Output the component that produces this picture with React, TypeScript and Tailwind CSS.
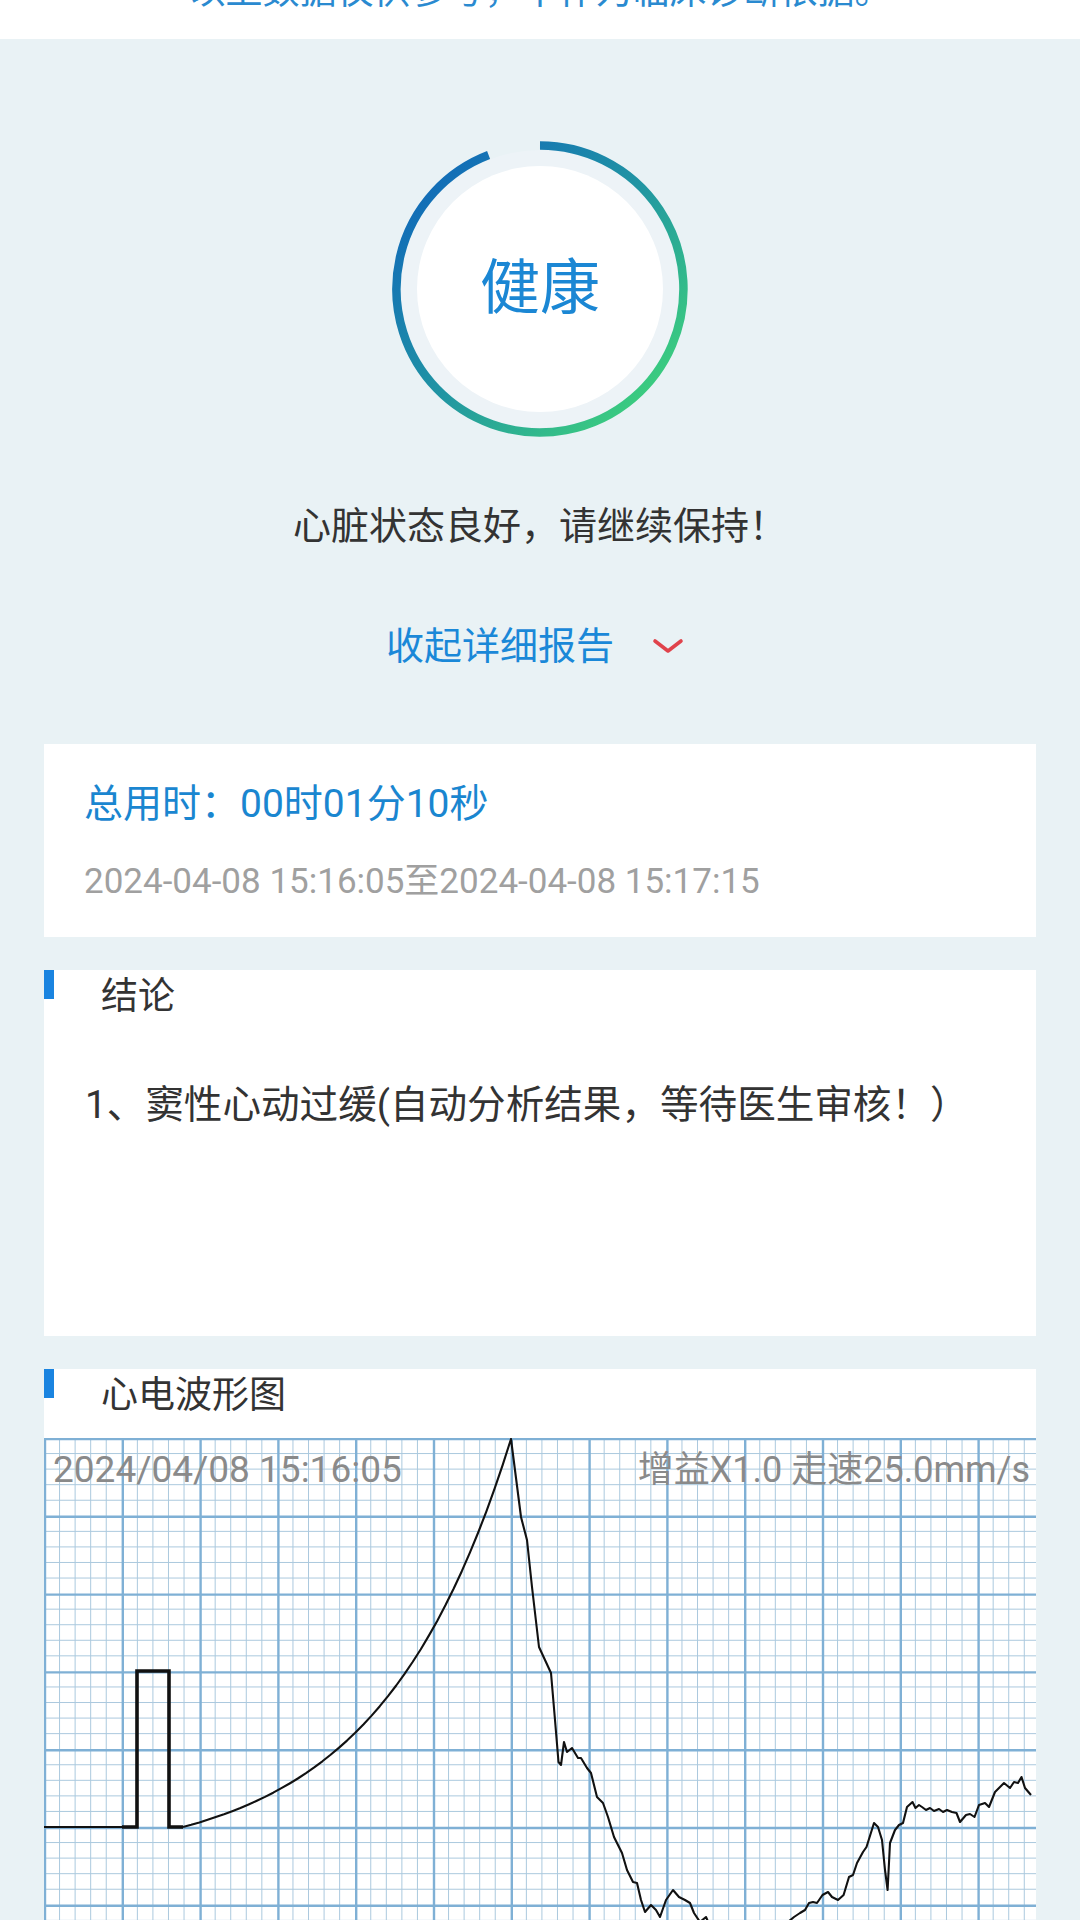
import React from 'react';

const MAJOR = 77.8;
const MINOR = MAJOR / 5;
const GRID_W = 992;
const GRID_H = 500;

// rising curve after the calibration pulse, then the noisy tail
const buildWave = () => {
  const pts: [number, number][] = [];
  const k = 2.5;
  for (let i = 0; i <= 40; i++) {
    const t = i / 40;
    const f = (Math.exp(k * t) - 1) / (Math.exp(k) - 1);
    pts.push([139 + t * 328, 389 - 388 * f]);
  }
  const tail: [number, number][] = [
    [477, 79], [483, 102], [488, 149], [495, 209], [501, 222], [507, 235], [511, 282],
    [514.5, 324], [517, 327], [520, 304], [523, 314], [528, 310], [534, 320], [537, 320],
    [543, 330], [547, 335], [553, 359], [559, 365], [564, 379], [570, 399], [578, 415],
    [583, 432], [589, 444], [593, 445], [597, 462], [601, 474], [607, 467], [612, 472],
    [616, 479], [622, 462], [629, 452], [635, 459], [641, 462], [646, 465], [650, 475],
    [656, 484], [662, 479], [666, 488], [700, 505], [716, 502], [744, 484], [750, 479],
    [756, 475], [761, 472], [765, 465], [769, 464], [773, 465], [778.5, 457], [784, 454],
    [788, 459], [794, 462], [799.6, 457], [805, 439], [809, 437], [813, 425], [819, 414],
    [822.5, 409], [830, 385], [834, 389], [838, 402], [841, 432], [843.6, 452], [846, 405],
    [851, 392], [855, 387], [859, 385], [863, 369], [868.5, 364], [871.5, 370], [875, 367],
    [878, 369], [882, 372], [886, 370], [890, 373], [895, 371], [899, 374], [903, 372],
    [908, 374], [912.5, 375], [916, 384], [922, 377], [926, 376], [930.5, 379], [935, 367],
    [941, 365], [945, 369], [951, 354], [956, 349], [960, 345], [966, 350], [970, 344],
    [974, 345], [977.5, 339], [981, 350], [987, 357],
  ];
  return pts.concat(tail).map(([x, y]) => `${x.toFixed(1)},${y.toFixed(1)}`).join(' ');
};

const EcgGrid: React.FC = () => {
  const vCount = Math.ceil(GRID_W / MINOR);
  const hCount = Math.ceil(GRID_H / MINOR);
  const vLines = Array.from({ length: vCount + 1 }, (_, i) => i);
  const hLines = Array.from({ length: hCount + 1 }, (_, i) => i);

  return (
    <div className="relative w-full h-[500px]">
      <svg width={GRID_W} height={GRID_H} className="block">
        {vLines.filter(i => i % 5 !== 0).map(i => (
          <line key={`vm${i}`} x1={i * MINOR} y1={0} x2={i * MINOR} y2={GRID_H} stroke="#abc9de" strokeWidth={1} />
        ))}
        {hLines.filter(i => i % 5 !== 0).map(i => (
          <line key={`hm${i}`} x1={0} y1={i * MINOR} x2={GRID_W} y2={i * MINOR} stroke="#abc9de" strokeWidth={1} />
        ))}
        {vLines.filter(i => i % 5 === 0).map(i => (
          <line key={`vM${i}`} x1={i * MINOR + 1} y1={0} x2={i * MINOR + 1} y2={GRID_H} stroke="#7fb0d5" strokeWidth={2.4} />
        ))}
        {hLines.filter(i => i % 5 === 0).map(i => (
          <line key={`hM${i}`} x1={0} y1={i * MINOR + 1} x2={GRID_W} y2={i * MINOR + 1} stroke="#7fb0d5" strokeWidth={2.4} />
        ))}

        {/* calibration pulse */}
        <polyline points="0,389 78,389" fill="none" stroke="#111" strokeWidth={2} />
        <polyline
          points="78,389 93,389 93,233 125,233 125,389 139,389"
          fill="none"
          stroke="#111"
          strokeWidth={3.6}
          strokeLinejoin="miter"
        />
        <polyline points={buildWave()} fill="none" stroke="#111" strokeWidth={2.1} strokeLinejoin="round" />
      </svg>

      <span className="absolute left-[9px] top-[12px] text-[37px] leading-[40px] text-[#8a8a8a]">
        2024/04/08 15:16:05
      </span>
      <span className="absolute right-[6px] top-[12px] text-[36px] leading-[40px] text-[#8a8a8a]">
        增益X1.0 走速25.0mm/s
      </span>
    </div>
  );
};

const SectionTitle: React.FC<{ title: string }> = ({ title }) => (
  <div className="flex items-start h-[54px]">
    <div className="w-[10px] h-[29px] bg-[#1a84e0]" />
    <span className="ml-[47px] text-[37px] leading-[54px] text-[#333333]">{title}</span>
  </div>
);

const ScoreRing: React.FC = () => (
  <div className="relative w-[296px] h-[296px] flex items-center justify-center">
    <svg width={296} height={296} className="absolute inset-0">
      <defs>
        <linearGradient id="ringGrad" x1="0.05" y1="0.15" x2="0.9" y2="0.95">
          <stop offset="0" stopColor="#116ab9" />
          <stop offset="0.5" stopColor="#2196a2" />
          <stop offset="1" stopColor="#3fd47a" />
        </linearGradient>
      </defs>
      <circle cx={148} cy={148} r={139} fill="#edf3f7" />
      <circle cx={148} cy={148} r={123} fill="#ffffff" />
      {/* arc from 12 o'clock clockwise, leaving a gap at upper left */}
      <path
        d="M148 4.5 A143.5 143.5 0 1 1 96.6 14"
        fill="none"
        stroke="url(#ringGrad)"
        strokeWidth={8.5}
      />
    </svg>
    <span className="relative text-[60px] leading-[70px] text-[#1b87d4]">健康</span>
  </div>
);

export default function App() {
  return (
    <div className="w-[1080px] h-[1920px] overflow-hidden bg-[#e9f2f5] font-[Roboto,'Noto_Sans_CJK_SC',sans-serif]">
      {/* header (scrolled) */}
      <div className="h-[39px] bg-white overflow-hidden flex justify-center">
        <p className="mt-[-27px] text-[37px] leading-[38px] text-[#2a8ad0] whitespace-nowrap">
          以上数据仅供参考，不作为临床诊断依据。
        </p>
      </div>

      <div className="flex flex-col items-center pt-[102px]">
        <ScoreRing />
        <p className="mt-[64px] text-[38px] leading-[50px] text-[#333333]">心脏状态良好，请继续保持！</p>
        <button className="mt-[70px] h-[50px] flex items-center pr-[10px]">
          <span className="text-[38px] leading-[50px] text-[#1a88d8]">收起详细报告</span>
          <svg width={32} height={16} viewBox="0 0 32 16" className="ml-[38px]">
            <polyline points="3,3 16,13 29,3" fill="none" stroke="#e0434b" strokeWidth={3.6} strokeLinecap="round" strokeLinejoin="round" />
          </svg>
        </button>
      </div>

      <div className="px-[44px] mt-[73px] flex flex-col">
        {/* duration */}
        <div className="bg-white h-[193px] pl-[40px] pt-[33px]">
          <p className="text-[39px] leading-[54px] text-[#1a86d0]">总用时：00时01分10秒</p>
          <p className="mt-[26px] text-[35px] leading-[50px] text-[#a0a0a0]">2024-04-08 15:16:05至2024-04-08 15:17:15</p>
        </div>

        {/* conclusion */}
        <div className="bg-white h-[366px] mt-[33px]">
          <SectionTitle title="结论" />
          <p className="mt-[54px] pl-[41px] text-[38.6px] leading-[54px] text-[#333333]">
            1、窦性心动过缓(自动分析结果，等待医生审核！）
          </p>
        </div>

        {/* ecg */}
        <div className="bg-white mt-[33px]">
          <SectionTitle title="心电波形图" />
          <div className="mt-[15px]">
            <EcgGrid />
          </div>
        </div>
      </div>
    </div>
  );
}
